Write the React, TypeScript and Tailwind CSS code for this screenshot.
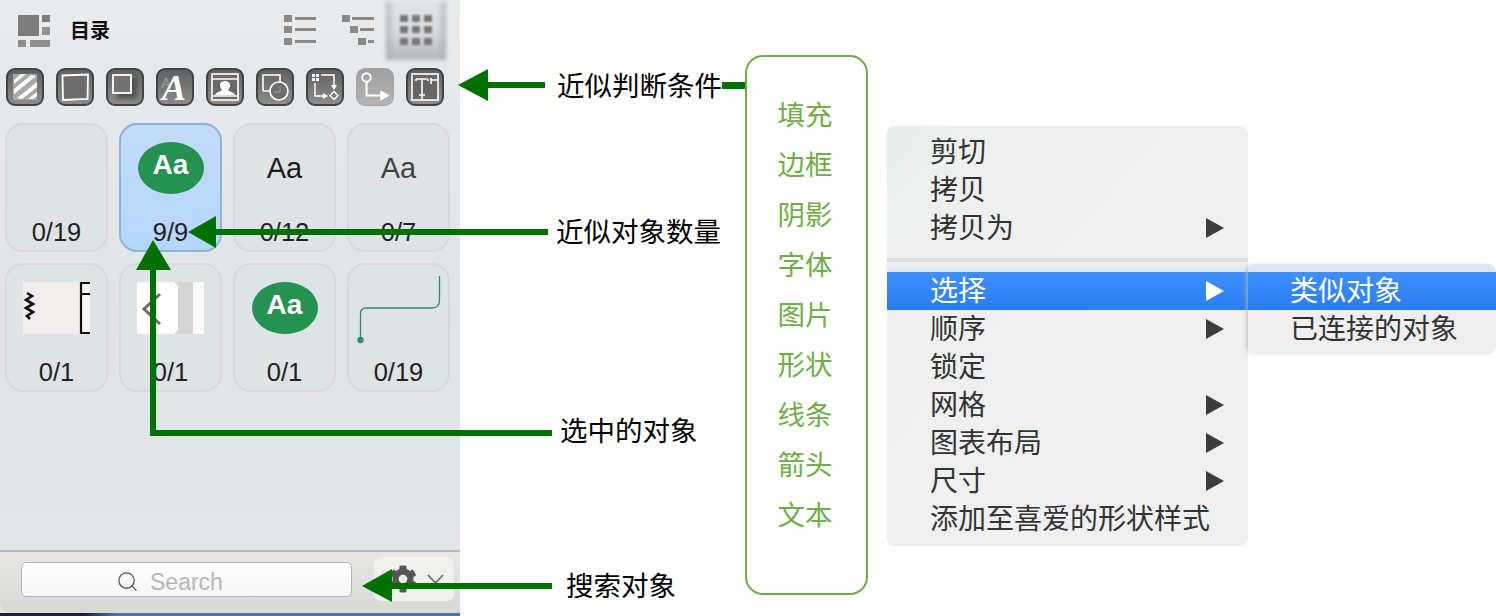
import React from "react";
import { Search } from "lucide-react";
import { FaCog } from "react-icons/fa";

const W = "#ffffff";

function Btn({ children, light }: { children: React.ReactNode; light?: boolean }) {
  return (
    <div
      className={
        light
          ? "w-[38px] h-[38px] rounded-[9px] border border-[#a5a5a5] bg-linear-to-b from-[#a0a0a0] to-[#b4b4b4] overflow-hidden"
          : "w-[38px] h-[38px] rounded-[9px] border-2 border-[#424546] bg-linear-to-b from-[#5f6162] to-[#8c8c8c] overflow-hidden"
      }
    >
      <svg width="100%" height="100%" viewBox="0 0 34 34" fill="none">
        {children}
      </svg>
    </div>
  );
}

function TopIcons() {
  return (
    <div className="flex gap-[12px] px-[6px] mt-[8px] h-[38px]">
      <Btn>
        <rect x="5" y="4" width="24" height="26" fill="#a9a9a9" />
        <path d="M6 10 13 4h5L6 14ZM6 19 23 5l5 1L6 24ZM9 28 29 12v5L14 29ZM20 29l9-7v4l-4 3Z" fill={W} />
      </Btn>
      <Btn>
        <path d="M4.5 5.500 30 4.500 29.500 29 5 30Z" stroke={W} strokeWidth="1.8" fill="#6d6d6d" />
      </Btn>
      <Btn>
        <rect x="9" y="9" width="20" height="20" fill="#303030" opacity=".55" style={{ filter: "blur(2px)" }} />
        <rect x="5" y="5" width="18" height="18" stroke={W} strokeWidth="1.8" fill="#727272" />
      </Btn>
      <Btn>
        <text x="3" y="18" fontFamily="Liberation Sans" fontSize="15" fill="#9a9a9a">A</text>
        <text x="4" y="30" fontFamily="Liberation Serif" fontStyle="italic" fontWeight="700" fontSize="36" fill={W}>A</text>
      </Btn>
      <Btn>
        <rect x="4" y="4" width="26" height="26" stroke={W} strokeWidth="1.6" fill="#6a6a6a" />
        <path d="M4 9h26" stroke={W} strokeWidth="1.6" />
        <path d="M7 25c1-3 5-3 7-5-2-2-2-4-2-5 0-3 3-4 5-4s5 1 5 4c0 1 0 3-2 5 2 2 6 2 7 5Z" fill={W} />
        <path d="M4 26h26" stroke={W} strokeWidth="1.6" />
      </Btn>
      <Btn>
        <path d="M5 21V5h17v8" stroke={W} strokeWidth="1.6" />
        <path d="M5 21h8" stroke={W} strokeWidth="1.6" />
        <circle cx="21" cy="21" r="9" stroke={W} strokeWidth="1.6" fill="#6e6e6e" />
        <path d="M22 16v6h-6" stroke="#a0a0a0" strokeWidth="1" />
      </Btn>
      <Btn>
        <path d="M4 4h3v3H4zM8 4h3v3H8zM4 8h3v3H4zM8 8h3v3H8z" fill={W} />
        <path d="M13 5h13v11M7 13v13h10" stroke={W} strokeWidth="1.5" />
        <path d="M23 15h6l-3 5ZM15 23l5 3-5 3Z" fill={W} />
        <path d="M26 21.500l4 4-4 4-4-4Z" stroke={W} strokeWidth="1.3" />
      </Btn>
      <Btn light>
        <circle cx="9" cy="8" r="4" stroke={W} strokeWidth="1.8" />
        <path d="M9 12v13h14" stroke={W} strokeWidth="2" />
        <path d="M22 20l9 5-9 5Z" fill={W} />
      </Btn>
      <Btn>
        <rect x="4" y="4" width="26" height="26" stroke={W} strokeWidth="1.6" fill="#666" />
        <path d="M8 9h12M8 9v2M20 9v2M14 9v16M11 25h6M14 25v5M23 8v6M23 10h7" stroke={W} strokeWidth="1.6" />
      </Btn>
    </div>
  );
}

function Card({ label, selected, children }: { label: string; selected?: boolean; children?: React.ReactNode }) {
  return (
    <div
      className={
        selected
          ? "w-[103px] h-[129px] rounded-[18px] border-2 border-[#93b3d6] bg-linear-to-b from-[#c3dcf8] to-[#b5d6fc] flex flex-col items-center"
          : "w-[103px] h-[129px] rounded-[18px] border-2 border-[#d5dadd] bg-[#dee3e6] flex flex-col items-center"
      }
    >
      <div className="h-[90px] pt-[17px] flex justify-center items-start">{children}</div>
      <div className="mt-auto pb-[6px] text-[25.5px] leading-[24px] text-[#222] font-['Liberation_Sans',sans-serif]">{label}</div>
    </div>
  );
}

function Oval() {
  return (
    <div className="w-[66px] h-[52px] rounded-[50%] bg-[#259253] flex items-center justify-center text-white font-bold text-[28px] leading-none font-['Liberation_Sans',sans-serif] pb-[6px]">
      Aa
    </div>
  );
}

function Panel() {
  return (
    <div className="w-[460px] h-[616px] shrink-0 flex flex-col bg-linear-to-b from-[#e9ebed] via-[#dfe4e7] to-[#e4e6e9]">
      <div className="h-[60px] flex items-center pl-[18px] relative">
        <svg width="32" height="32" viewBox="0 0 32 32" className="mb-[-2px]">
          <g fill="#7c7c7c">
            <rect x="0" y="0" width="21" height="21" />
            <rect x="24" y="0" width="8" height="7" />
            <rect x="24" y="12" width="8" height="8" opacity=".8" />
            <rect x="0" y="25" width="8" height="7" opacity=".85" />
            <rect x="12" y="25" width="20" height="7" opacity=".85" />
          </g>
        </svg>
        <span className="ml-[20px] text-[20px] font-bold text-[#111] font-['Noto_Sans_CJK_SC',sans-serif]">目录</span>
        <div className="ml-auto flex items-start self-stretch">
          <svg width="32" height="30" viewBox="0 0 32 30" className="mt-[15px] mr-[26px]">
            <g fill="#8a8a8a">
              <rect x="0" y="0" width="8" height="7" /><rect x="11" y="2" width="21" height="3" />
              <rect x="0" y="11" width="8" height="7" /><rect x="11" y="13" width="21" height="3" />
              <rect x="0" y="23" width="8" height="7" /><rect x="11" y="25" width="21" height="3" />
            </g>
          </svg>
          <svg width="32" height="30" viewBox="0 0 32 30" className="mt-[15px] mr-[12px]">
            <g fill="#8a8a8a">
              <rect x="0" y="0" width="8" height="7" /><rect x="10" y="2" width="22" height="3" />
              <rect x="8" y="11" width="8" height="7" /><rect x="18" y="13" width="14" height="3" />
              <rect x="16" y="23" width="8" height="7" /><rect x="26" y="25" width="6" height="3" />
            </g>
          </svg>
          <div className="relative w-[60px] h-[58px] mt-[2px] mr-[14px] flex items-center justify-center">
            <div className="absolute inset-0 blur-[2px] bg-linear-to-b from-[#e2e5e7] via-[#dadde0] to-[#b4b6b8] shadow-[inset_7px_0_6px_-4px_#a4a6a8,inset_-7px_0_6px_-4px_#a4a6a8]" />
            <svg width="32" height="30" viewBox="0 0 32 30" className="relative blur-[1px] mb-[2px]">
              <g fill="#777777">
                {[0, 11, 23].map((y) =>
                  [0, 12, 24].map((x) => <rect key={x + "-" + y} x={x} y={y} width="8" height="7" />)
                )}
              </g>
            </svg>
          </div>
        </div>
      </div>

      <TopIcons />

      <div className="grid grid-cols-[103px_103px_103px_103px] gap-[11px] px-[5px] mt-[17px]">
        <Card label="0/19" />
        <Card label="9/9" selected>
          <Oval />
        </Card>
        <Card label="0/12">
          <span className="text-[29px] leading-[52px] text-[#1c1c1c] font-['Liberation_Sans',sans-serif]">Aa</span>
        </Card>
        <Card label="0/7">
          <span className="text-[29px] leading-[52px] text-[#444] font-['Liberation_Sans',sans-serif]">Aa</span>
        </Card>
        <Card label="0/1">
          <svg width="67" height="52" viewBox="0 0 67 52">
            <rect x="0" y="0" width="58" height="52" fill="#efeeed" />
            <rect x="58" y="0" width="9" height="52" fill="#f6f6f6" />
            <path d="M4 11l5 3-6 4 7 4-7 4 7 4-6 4 3 3" stroke="#111" strokeWidth="2.6" fill="none" />
            <path d="M67 1h-9v50h9M58 12h9" stroke="#111" strokeWidth="2.2" fill="none" />
          </svg>
        </Card>
        <Card label="0/1">
          <svg width="67" height="52" viewBox="0 0 67 52">
            <rect x="0" y="0" width="67" height="52" fill="#fbfbfb" />
            <path d="M38 0h18v52H38Z" fill="#d4d4d4" />
            <path d="M0 0h34q7 0 7 7v38q0 7-7 7H0Z" fill="#ffffff" />
            <path d="M23 12 7 27l16 15" stroke="#6a6a6a" strokeWidth="3" fill="none" />
          </svg>
        </Card>
        <Card label="0/1">
          <Oval />
        </Card>
        <Card label="0/19">
          <svg width="86" height="70" viewBox="0 0 86 70" className="mt-[-6px]">
            <path d="M83.500 0v24q0 8-8 8H10q-5.500 0-5.500 6v26" stroke="#2f8a60" strokeWidth="1.3" fill="none" />
            <circle cx="4.500" cy="64" r="3.200" fill="#2f9165" />
          </svg>
        </Card>
      </div>

      <div className="mt-auto">
        <div className="h-[63px] border-t-2 border-[#babdc0] rounded-bl-[10px] bg-linear-to-b from-[#e7e7e5] to-[#d8d8d6] flex items-start pl-[21px]">
          <div className="mt-[10px] w-[331px] h-[35px] pl-[94px] rounded-[5px] border border-[#b3b3b3] bg-linear-to-b from-[#ffffff] to-[#f6f6f6] flex items-center gap-[11px] font-['Liberation_Sans',sans-serif] text-[23px] leading-none text-[#b7b7b7]">
            <Search size={23} strokeWidth={1.4} color="#555" className="mt-[3px]" />
            <span className="pt-[5px]">Search</span>
          </div>
          <div className="mt-[5px] ml-[22px] w-[80px] h-[44px] rounded-[7px] bg-[#f0f0ef] flex items-center pl-[15px] gap-[10px]">
            <FaCog size={28} color="#565656" />
            <svg width="17" height="10" viewBox="0 0 17 10">
              <path d="M1 1l7.500 8L16 1" stroke="#666" strokeWidth="1.6" fill="none" />
            </svg>
          </div>
        </div>
        <div className="h-[3px] bg-linear-to-r from-[#1a2233] via-[#1a2233] via-[18%] to-[#4d70a8] to-[25%]" />
      </div>
    </div>
  );
}

function OptionsBox() {
  const items = ["填充", "边框", "阴影", "字体", "图片", "形状", "线条", "箭头", "文本"];
  return (
    <div className="ml-[285px] mt-[55px] w-[123px] h-[540px] shrink-0 rounded-[18px] border-2 border-[#70ad47] bg-white pt-[31px] pr-[3px] flex flex-col items-center">
      {items.map((t) => (
        <div key={t} className="h-[50px] leading-[50px] text-[27.5px] text-[#70ad47]">
          {t}
        </div>
      ))}
    </div>
  );
}

function Tri({ white }: { white?: boolean }) {
  return (
    <svg width="18" height="20" viewBox="0 0 18 20">
      <path d="M0 0l18 10L0 20Z" fill={white ? "#fff" : "#3c3c3c"} />
    </svg>
  );
}

function Row({ text, arrow, active, sub }: { text: string; arrow?: boolean; active?: boolean; sub?: boolean }) {
  return (
    <div
      className={
        (sub ? "pl-[42px] " : "pl-[43px] ") +
        (active
          ? "h-[38px] pr-[24px] flex items-center justify-between bg-linear-to-b from-[#3f90fb] to-[#2a7cf3] text-white text-[28px] leading-none"
          : "h-[38px] pr-[24px] flex items-center justify-between text-[#333] text-[28px] leading-none")
      }
    >
      <span className="pb-[4px]">{text}</span>
      {arrow && <Tri white={active} />}
    </div>
  );
}

function ContextMenu() {
  return (
    <div className="ml-[19px] mt-[126px] w-[361px] h-[420px] shrink-0 rounded-[7px] bg-linear-to-br from-[#e3eee8] via-[#eef0ef] via-[14%] to-[#f0f0f0] pt-[7px]">
      <Row text="剪切" />
      <Row text="拷贝" />
      <Row text="拷贝为" arrow />
      <div className="mt-[11px] h-[4px] bg-[#dcdcdc]" />
      <div className="h-[10px] bg-linear-to-b from-[#eef0f1] to-[#dbe9f6]" />
      <Row text="选择" arrow active />
      <Row text="顺序" arrow />
      <Row text="锁定" />
      <Row text="网格" arrow />
      <Row text="图表布局" arrow />
      <Row text="尺寸" arrow />
      <Row text="添加至喜爱的形状样式" />
    </div>
  );
}

function SubMenu() {
  return (
    <div className="mt-[264px] w-[248px] h-[90px] shrink-0 rounded-[7px] overflow-hidden shadow-[-3px_0_5px_-2px_#b5b5b5] pt-[8px] bg-linear-to-b from-[#dce9f5] from-[8%] to-[#efefef] to-[9%]">
      <Row text="类似对象" active sub />
      <Row text="已连接的对象" sub />
    </div>
  );
}

function Arrows() {
  return (
    <svg width="1496" height="616" viewBox="0 0 1496 616" className="absolute left-0 top-0 pointer-events-none" fill="#007000">
      <path d="M458 85l30-16v13h57v6h-57v13Z" />
      <rect x="722" y="82" width="23" height="7" />
      <path d="M188 232l28-16v13h332v6H216v13Z" />
      <path d="M153 240l18 30h-15v160h396v6H150V270h-14Z" />
      <path d="M362 586l30-17v14h160v6H392v13Z" />
    </svg>
  );
}

function Label({ text, className }: { text: string; className: string }) {
  return <div className={"absolute text-[27.5px] leading-[36px] text-black whitespace-nowrap " + className}>{text}</div>;
}

export default function App() {
  return (
    <div className="relative w-[1496px] h-[616px] overflow-hidden bg-white flex items-start font-['Noto_Sans_CJK_SC',sans-serif]">
      <Panel />
      <OptionsBox />
      <ContextMenu />
      <SubMenu />
      <Arrows />
      <Label text="近似判断条件" className="left-[557px] top-[66px]" />
      <Label text="近似对象数量" className="left-[556px] top-[212px]" />
      <Label text="选中的对象" className="left-[560px] top-[411px]" />
      <Label text="搜索对象" className="left-[566px] top-[566px]" />
    </div>
  );
}
